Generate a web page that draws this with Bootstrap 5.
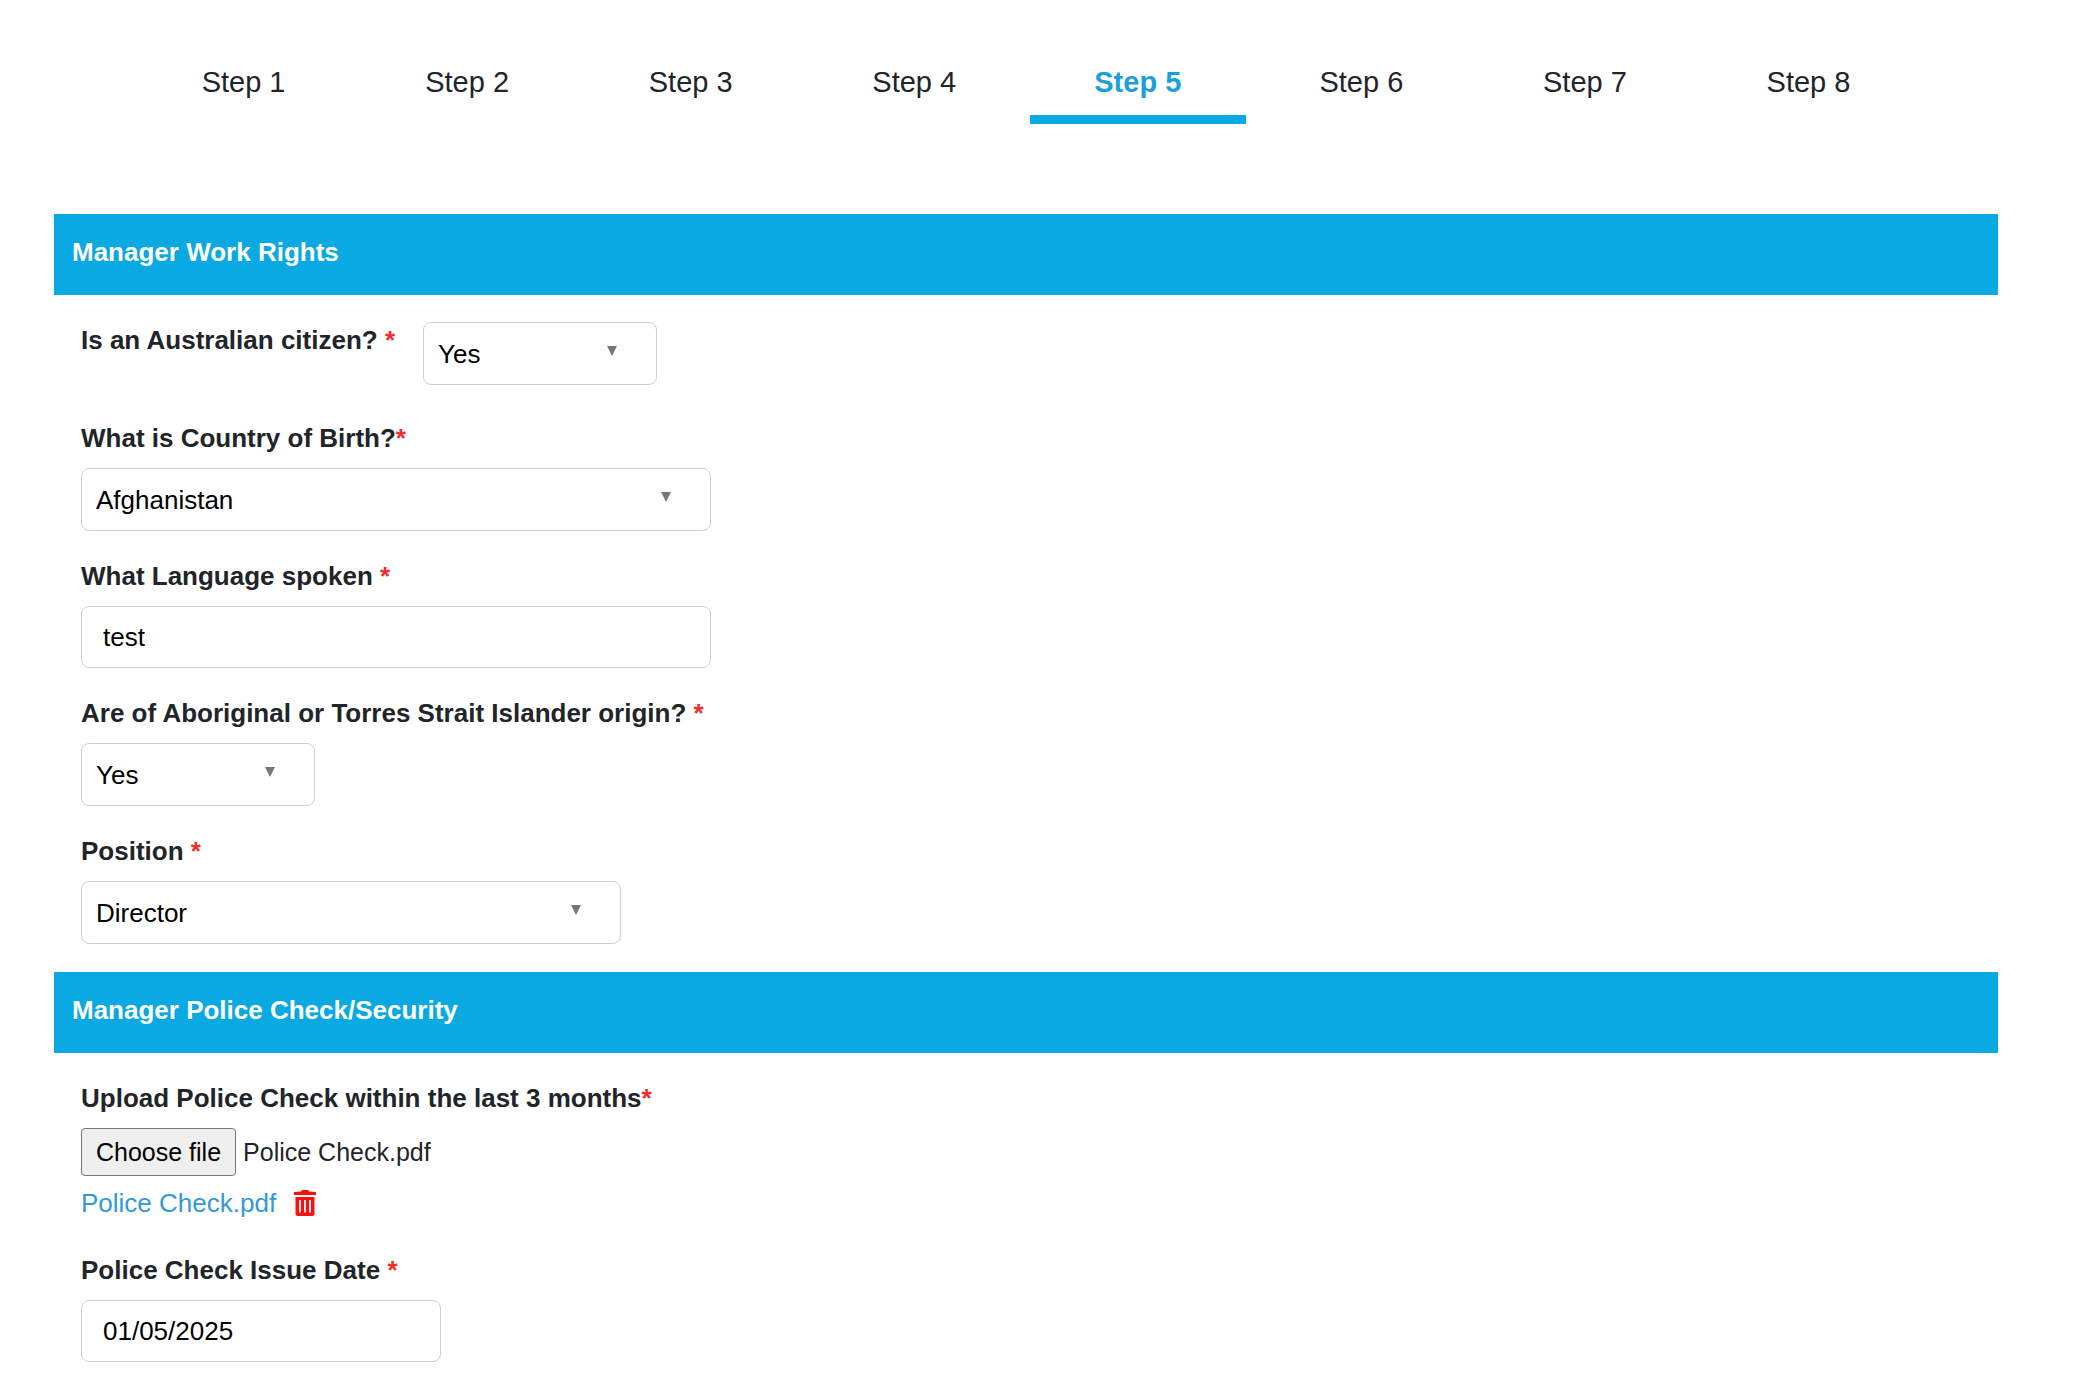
<!DOCTYPE html>
<html lang="en">
<head>
<meta charset="utf-8">
<meta name="viewport" content="width=device-width, initial-scale=1">
<title>Manager details</title>
<link href="https://cdn.jsdelivr.net/npm/bootstrap@5.3.0/dist/css/bootstrap.min.css" rel="stylesheet">
<style>
  body { font-family: "Liberation Sans", Arial, sans-serif; font-size: 26px; line-height: 36px; color: #212529; background: #fff; }
  .form-page { padding: 64px 78px 24px 54px; }
  .step-nav { width: 92%; margin: 0 auto 90px; }
  .step-nav .nav-item { padding: 0 4px; }
  .step-nav .nav-link { padding: 0 0 15px; border-bottom: 9px solid transparent; border-radius: 0; font-size: 29px; line-height: 36px; color: #212529; }
  .step-nav .nav-link.active { color: #1a9fdb; border-color: #0ba9e1; font-weight: 700; }
  .section-bar { margin: 0; padding: 20px 18px 25px; background: #0ba9e1; color: #fff; font-size: 26px; line-height: 36px; font-weight: 700; }
  .section-fields { padding: 27px 27px 28px; gap: 27px; }
  .field-label { margin: 0 0 12px; font-weight: 700; }
  .req { color: #f22b2b; }
  .citizen-row { gap: 28px; margin-bottom: 8px; }
  .form-control, .form-select { max-width: 100%; font-size: 26px; line-height: 36px; color: #000; border: 1px solid #d0d0d0; border-radius: 8px; }
  .form-control { height: 62px; padding: 0 21px; }
  .form-select { height: 63px; padding: 0 56px 0 14px; background-image: url("data:image/svg+xml,%3Csvg xmlns='http://www.w3.org/2000/svg' viewBox='0 0 10 10'%3E%3Cpath d='M0 0h10L5 10z' fill='%23777'/%3E%3C/svg%3E"); background-size: 10px 10px; background-position: right 39px top 23px; }
  .w-short { width: 234px; }
  .w-date { width: 360px; }
  .w-medium { width: 540px; }
  .w-long { width: 630px; }
  .file-btn { height: 48px; padding: 5px 14px; background: #efefef; border: 1px solid #767676; border-radius: 4px; color: #000; cursor: pointer; }
  .file-line { gap: 7px; margin-bottom: 9px; font-size: 25px; }
  .link-line { gap: 18px; margin-bottom: 4px; }
  .link-line a { color: #3498db; text-decoration: none; }
  .trash-btn { padding: 0; border: 0; background: none; color: #fb1010; line-height: 0; }
</style>
</head>
<body>
<main class="form-page">
  <nav aria-label="Steps">
    <ul class="nav nav-fill nav-justified step-nav">
      <li class="nav-item"><a class="nav-link" href="#">Step 1</a></li>
      <li class="nav-item"><a class="nav-link" href="#">Step 2</a></li>
      <li class="nav-item"><a class="nav-link" href="#">Step 3</a></li>
      <li class="nav-item"><a class="nav-link" href="#">Step 4</a></li>
      <li class="nav-item"><a class="nav-link active" aria-current="step" href="#">Step 5</a></li>
      <li class="nav-item"><a class="nav-link" href="#">Step 6</a></li>
      <li class="nav-item"><a class="nav-link" href="#">Step 7</a></li>
      <li class="nav-item"><a class="nav-link" href="#">Step 8</a></li>
    </ul>
  </nav>

  <form>
    <section>
      <h2 class="section-bar">Manager Work Rights</h2>
      <div class="section-fields d-flex flex-column">
        <div class="citizen-row d-flex align-items-start">
          <label class="field-label" for="citizen">Is an Australian citizen? <span class="req">*</span></label>
          <select class="form-select w-short" id="citizen"><option>Yes</option><option>No</option></select>
        </div>
        <div>
          <label class="field-label d-block" for="country">What is Country of Birth?<span class="req">*</span></label>
          <select class="form-select w-long" id="country"><option>Afghanistan</option></select>
        </div>
        <div>
          <label class="field-label d-block" for="language">What Language spoken <span class="req">*</span></label>
          <input class="form-control w-long" id="language" type="text" value="test">
        </div>
        <div>
          <label class="field-label d-block" for="origin">Are of Aboriginal or Torres Strait Islander origin? <span class="req">*</span></label>
          <select class="form-select w-short" id="origin"><option>Yes</option><option>No</option></select>
        </div>
        <div>
          <label class="field-label d-block" for="position">Position <span class="req">*</span></label>
          <select class="form-select w-medium" id="position"><option>Director</option></select>
        </div>
      </div>
    </section>

    <section>
      <h2 class="section-bar">Manager Police Check/Security</h2>
      <div class="section-fields d-flex flex-column pb-0">
        <div>
          <label class="field-label d-block" for="police-file">Upload Police Check within the last 3 months<span class="req">*</span></label>
          <div class="file-line d-flex align-items-center">
            <input class="visually-hidden" id="police-file" type="file">
            <label class="file-btn" for="police-file">Choose file</label>
            <span>Police Check.pdf</span>
          </div>
          <div class="link-line d-flex align-items-center">
            <a href="#">Police Check.pdf</a>
            <button class="trash-btn" type="button" aria-label="Delete file">
              <svg width="22" height="26" viewBox="0 0 22 26" fill="none" aria-hidden="true">
                <path d="M7 1.500Q7 0 8.500 0h5Q15 0 15 1.500L22 2v3H0V2l7-.5z" fill="currentColor"/>
                <path d="M1.500 7h19v16.500a2.500 2.500 0 0 1-2.500 2.500H4a2.500 2.500 0 0 1-2.500-2.500z" fill="currentColor"/>
                <path d="M6 10v12.500M11 10v12.500M16 10v12.500" stroke="#fff" stroke-width="1.800"/>
              </svg>
            </button>
          </div>
        </div>
        <div>
          <label class="field-label d-block" for="issue-date">Police Check Issue Date <span class="req">*</span></label>
          <input class="form-control w-date" id="issue-date" type="text" value="01/05/2025">
        </div>
      </div>
    </section>
  </form>
</main>
<script src="https://cdn.jsdelivr.net/npm/bootstrap@5.3.0/dist/js/bootstrap.bundle.min.js"></script>
</body>
</html>
